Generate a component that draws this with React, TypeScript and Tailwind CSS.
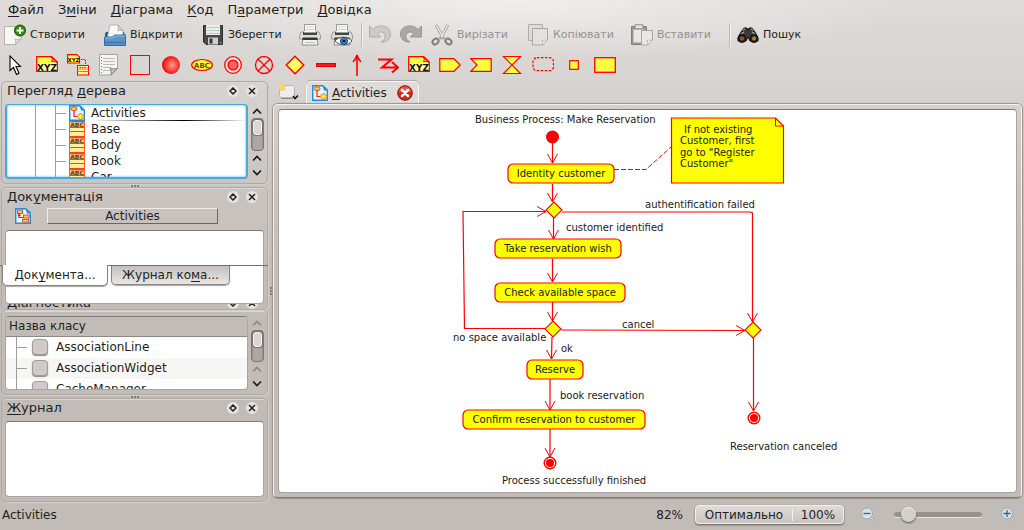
import React, { useState } from "react";
import type { ReactNode } from "react";

const RED = "#ff0000";
const YELLOW = "#ffff40";

function Icon({ children, size = 22 }: { children: ReactNode; size?: number }) {
  return (
    <svg width={size} height={size} viewBox={`0 0 ${size} ${size}`} className="shrink-0" aria-hidden="true">
      {children}
    </svg>
  );
}

/* ---------- main toolbar icons ---------- */

const NewIcon = () => (
  <Icon>
    <path d="M.5 2.500h17v12l-6 6H.5z" fill="#f6f6f5" stroke="#b5b3b0" />
    <path d="M17.500 14.500l-6 6c.3-2 .3-4-.5-5.500 2 .8 4 .6 6.500-.5z" fill="#dcdad8" stroke="#a5a3a0" strokeWidth=".7" />
    <circle cx="16" cy="6.500" r="6" fill="#2f8a0f" />
    <circle cx="16" cy="6.500" r="5.300" fill="none" stroke="#1f6207" />
    <path d="M16 3v7M12.500 6.500h7" stroke="#fff" strokeWidth="2.200" />
  </Icon>
);
const OpenIcon = () => (
  <Icon>
    <path d="M1 10l1-2h18l1 3v9H1z" fill="#27588c" />
    <path d="M6 1h8l5 6v8H3z" fill="#f7f7f7" stroke="#aaa" strokeWidth=".8" />
    <path d="M14 1c.6 2 .4 4-.2 5.700 2-.5 3.500-.5 5.200.3z" fill="#d6d6d6" stroke="#999" strokeWidth=".6" />
    <path d="M.5 13h8l2-2h11v10.500H.5z" fill="#5d94c9" stroke="#326aa3" />
    <path d="M1 14h8l2-2h10" fill="none" stroke="#94bce2" />
    <path d="M1 18.500h20" stroke="#437cb4" strokeWidth="2" />
  </Icon>
);
const SaveIcon = () => (
  <Icon>
    <path d="M1.500 1.500h19v19H4l-2.500-2.500z" fill="#47494b" stroke="#2c2d2e" />
    <rect x="4" y="1" width="14" height="10" fill="#eceeed" />
    <path d="M4 3.500h14M4 6.500h14M4 9.500h14" stroke="#b9cfc4" />
    <rect x="6" y="13.500" width="10" height="7" fill="#cfcfcf" />
    <rect x="7.500" y="14.500" width="3" height="5" fill="#333" />
    <path d="M18 19h2" stroke="#999" />
  </Icon>
);
const PrinterShape = () => (
  <>
    <path d="M5.500 .5h11v8h-11z" fill="#fafafa" stroke="#9a9a9a" />
    <path d="M7 3h8M7 5.500h8" stroke="#d0d0d0" />
    <path d="M2 8h18l1.500 4v3H.5v-3z" fill="#dededd" stroke="#9b9b9a" />
    <rect x="4" y="8" width="14" height="3" fill="#444" />
    <path d="M5 7h12v1.500H5z" fill="#f5f5f5" />
    <path d="M4 15h14l1 6H3z" fill="#f3f3f3" stroke="#8e8e8e" />
    <rect x="3.500" y="13.500" width="15" height="2.500" fill="#333" />
  </>
);
const PrintIcon = () => (
  <Icon>
    <PrinterShape />
    <path d="M6 18.500h10" stroke="#bbb" />
  </Icon>
);
const PreviewIcon = () => (
  <Icon>
    <PrinterShape />
    <path d="M4 17c4-5 12-5 17 0-4 5-12 5-17 0z" fill="#fff" stroke="#555" />
    <circle cx="13" cy="17" r="3.600" fill="#3f83c4" stroke="#1c4f82" />
    <circle cx="13" cy="17" r="1.500" fill="#0d2238" />
  </Icon>
);
const UndoIcon = () => (
  <Icon>
    <path d="M4 5.500C9-.5 21.500 1 21.500 10c0 5-4 8.500-9.500 8 3-1.500 4.500-3.500 4-6.500-.6-4-5-4.500-7.500-2l3 3.500H.5V2z" fill="#cdcbc9" stroke="#aeaca9" />
  </Icon>
);
const RedoIcon = () => (
  <Icon>
    <path d="M18 5.500C13-.5.5 1 .5 10c0 5 4 8.500 9.500 8-3-1.500-4.500-3.500-4-6.500.6-4 5-4.500 7.500-2l-3 3.500h11V2z" fill="#aaa9a6" stroke="#989693" />
  </Icon>
);
const CutIcon = () => (
  <Icon>
    <path d="M5 1l8 14M17 1L9 15" stroke="#a9a7a5" strokeWidth="3" />
    <path d="M5.300 1.500L12 13M16.700 1.500L10 13" stroke="#eeeded" strokeWidth="1.300" />
    <ellipse cx="4.500" cy="17.500" rx="3.300" ry="2.500" transform="rotate(-40 4.500 17.500)" fill="none" stroke="#7f7e7d" strokeWidth="2" />
    <ellipse cx="17.500" cy="17.500" rx="3.300" ry="2.500" transform="rotate(40 17.500 17.500)" fill="none" stroke="#7f7e7d" strokeWidth="2" />
  </Icon>
);
const CopyIcon = () => (
  <Icon>
    <path d="M1.500 .5h14v16h-14z" fill="#dddbd9" stroke="#b0aeab" />
    <path d="M5.500 4.500h15v11l-5 5.500h-10z" fill="#e3e1df" stroke="#aaa8a5" />
    <path d="M20.500 15.500l-5 5.500c.4-2 .2-3.500-.5-5 2 .6 3.500.4 5.500-.5z" fill="#f5f5f4" stroke="#aaa8a5" strokeWidth=".7" />
  </Icon>
);
const PasteIcon = () => (
  <Icon>
    <path d="M.5 2.500h15v18H.5z" fill="#999793" stroke="#81807d" />
    <path d="M2.500 5.500h11v13h-11z" fill="#e9e8e7" />
    <path d="M4 .8h8v4H4z" fill="#e5e4e3" stroke="#8a8986" />
    <path d="M10.500 6.500h11v9l-5 5.500h-6z" fill="#e8e7e6" stroke="#a8a6a4" />
    <path d="M21.500 15.500l-5 5.500c.3-2 .2-3.500-.5-5 2 .6 3.500.4 5.500-.5z" fill="#fafafa" stroke="#a8a6a4" strokeWidth=".7" />
  </Icon>
);
const FindIcon = () => (
  <Icon>
    <path d="M4 8l3-4h3l1 3 1-3h3l3 4 3 6v3h-8l-2-4-2 4H1v-3z" fill="#3b3a38" stroke="#171615" />
    <path d="M6 6l2-1M14 5l2 1M4 10l3-2M15 8l3 2" stroke="#aaa6a0" strokeWidth="1.300" />
    <circle cx="5" cy="14.500" r="4" fill="#2a2521" stroke="#0f0e0d" />
    <circle cx="17" cy="14.500" r="4" fill="#2a2521" stroke="#0f0e0d" />
    <circle cx="5" cy="14.500" r="2" fill="#a0531f" />
    <circle cx="17" cy="14.500" r="2" fill="#b8842a" />
  </Icon>
);

/* ---------- diagram tool icons ---------- */

const Xyz = () => (
  <>
    <path d="M.7 2.700h15L21.300 8v9.300H.7z" fill="#ffff40" stroke={RED} strokeWidth="1.200" />
    <path d="M15 3c1.500 1.500 1.500 3 .5 4.500 2-.3 4 0 5.500 1z" fill="#ffe0a0" stroke={RED} />
    <rect x="2" y="9" width="18.500" height="8" fill="#fff" opacity=".5" />
    <text x="11" y="16.500" textAnchor="middle" fontSize="9" fontWeight="bold" fill="#111" fontFamily="DejaVu Sans">XYZ</text>
  </>
);

const tools: { name: string; art: ReactNode }[] = [
  {
    name: "Select",
    art: <path d="M5 2v14.500l3.500-3 3 7 2.500-1.200-3-6.800h4.500z" fill="#fff" stroke="#000" strokeWidth="1.100" />,
  },
  { name: "Object", art: <Xyz /> },
  {
    name: "Object flow",
    art: (
      <>
        <path d="M.6.600h9L12.500 3v6H.6z" fill="#ffff40" stroke={RED} strokeWidth="1.100" />
        <text x="6.500" y="8" textAnchor="middle" fontSize="5.500" fontWeight="bold" fill="#111" fontFamily="DejaVu Sans">XYZ</text>
        <path d="M14 5.500h4.500V11" fill="none" stroke={RED} strokeDasharray="1.500 1" />
        <rect x="10.500" y="11.500" width="11" height="9.500" fill="#fff59a" stroke={RED} />
        <path d="M10.500 15h11M10.500 17.500h11" stroke="#ff6a2a" />
        <path d="M12.500 13.500h7" stroke="#a33" strokeDasharray="1.500 .8" />
      </>
    ),
  },
  {
    name: "Note",
    art: (
      <>
        <path d="M1.500 .5h18v14l-6.500 6.500H1.500z" fill="#f4f4f3" stroke="#a5a4a2" />
        <path d="M5 4.500h12M5 7.500h12M5 10.500h12M5 13.500h8M5 16.500h7" stroke="#b9b9b8" />
        <path d="M3.500 3v17" stroke="#777" strokeDasharray="1 2" />
        <path d="M19.500 14.500L13 21c.3-2.500.2-4.500-.8-6.500 2.300.6 5.300.5 7.300 0z" fill="#c4c3c1" stroke="#7f7e7c" />
      </>
    ),
  },
  { name: "Box", art: <rect x="1.500" y="1.500" width="19" height="19" fill="none" stroke={RED} /> },
  { name: "Initial node", art: <circle cx="11" cy="11" r="9" fill="url(#ball)" /> },
  {
    name: "Activity",
    art: (
      <>
        <ellipse cx="11" cy="11" rx="10.300" ry="5.500" fill="#ffff40" stroke={RED} strokeWidth="1.200" />
        <text x="11" y="13.500" textAnchor="middle" fontSize="7" fontWeight="bold" fill="#7a3a00" fontFamily="DejaVu Sans">ABC</text>
      </>
    ),
  },
  {
    name: "Final node",
    art: (
      <>
        <circle cx="11" cy="11" r="8.300" fill="#fbe2df" stroke={RED} strokeWidth="1.300" />
        <circle cx="11" cy="11" r="4.900" fill="#ff6060" stroke={RED} strokeWidth="1.300" />
      </>
    ),
  },
  {
    name: "Flow final",
    art: (
      <>
        <circle cx="11" cy="11" r="8.500" fill="none" stroke={RED} strokeWidth="1.300" />
        <path d="M5 5l12 12M17 5L5 17" stroke={RED} strokeWidth="1.300" />
      </>
    ),
  },
  {
    name: "Branch",
    art: (
      <>
        <path d="M11 2.200L19.800 11 11 19.800 2.200 11z" fill="#ffff40" stroke={RED} strokeWidth="1.400" />
        <path d="M6 11l6-5M8 14l7-6" stroke="#fffbd0" strokeWidth="1.500" />
      </>
    ),
  },
  { name: "Fork", art: <rect x="1.500" y="9.500" width="19" height="3" fill="#ff1818" stroke="#e60000" /> },
  { name: "Transition", art: <path d="M11 22V1.500M7 8q3-3 4-7 1 4 4 7" fill="none" stroke={RED} strokeWidth="1.600" /> },
  {
    name: "Exception",
    art: <path d="M1 5.500h13.500L5 13.500h15.500M15 8l6 5.500-6 5" fill="none" stroke={RED} strokeWidth="2" />,
  },
  { name: "Pre/post condition", art: <Xyz /> },
  { name: "Send signal", art: <path d="M.8 4.700h14l6.400 6.300-6.400 6.300H.8z" fill={YELLOW} stroke={RED} strokeWidth="1.200" /> },
  { name: "Accept signal", art: <path d="M.8 4.700h20.400v12.600H.8L7 11z" fill={YELLOW} stroke={RED} strokeWidth="1.200" /> },
  { name: "Time event", art: <path d="M2.500 2.500h17l-17 17h17z" fill={YELLOW} stroke={RED} strokeWidth="1.200" /> },
  {
    name: "Region",
    art: <rect x="1" y="3.700" width="20.500" height="13" rx="4" fill="none" stroke={RED} strokeWidth="1.200" strokeDasharray="2.500 1.500" />,
  },
  { name: "Pin", art: <rect x="6.700" y="6.700" width="8.600" height="8.600" fill={YELLOW} stroke={RED} strokeWidth="1.200" /> },
  { name: "Object node", art: <rect x=".7" y="3.700" width="20.600" height="14.600" fill={YELLOW} stroke={RED} strokeWidth="1.300" /> },
];

/* ---------- small shared drawings ---------- */

const DiagramIcon = () => (
  <Icon size={16}>
    <path d="M.7.700h10L15.300 5v10.300H.7z" fill="#eaf6ff" stroke="#1e8ee0" strokeWidth="1.400" />
    <path d="M10.500 0L16 5.500h-4z" fill="#1e8ee0" />
    <ellipse cx="5" cy="3.700" rx="3" ry="2" fill="#ffc840" stroke="#e0501a" />
    <path d="M5 6v5.500h4" fill="none" stroke="#f02010" strokeWidth="1.200" />
    <path d="M11.500 8l3.500 3.500-3.500 3.500L8 11.500z" fill="#ffee30" stroke="#f06018" />
  </Icon>
);
const ComponentIcon = () => (
  <Icon size={16}>
    <path d="M.7.700h10L15.300 5v10.300H.7z" fill="#eaf6ff" stroke="#1e8ee0" strokeWidth="1.400" />
    <path d="M10.500 0L16 5.500h-4z" fill="#1e8ee0" />
    <rect x="2.500" y="2" width="5" height="3.500" fill="#ffc070" stroke="#e8501a" />
    <path d="M4 6v3.500h4M3 8l1-2 1.500 2" fill="none" stroke="#f02010" strokeWidth="1.200" />
    <rect x="8.500" y="7" width="5.500" height="3" fill="#ffc070" stroke="#e8501a" />
    <rect x="7.500" y="11.500" width="6" height="2.500" fill="#ffd080" stroke="#e8501a" />
  </Icon>
);
const ClassIcon = () => (
  <Icon size={16}>
    <rect width="16" height="16" fill="#fff0a0" />
    <rect y="1" width="16" height="5" fill="#f0c070" />
    <text x="8" y="5.500" textAnchor="middle" fontSize="6" fontWeight="bold" fill="#6b3b10" fontFamily="DejaVu Sans">ABC</text>
    <path d="M0 .5h16M0 6.500h16M0 10.500h16M0 15.500h16" stroke="#ff3c20" strokeWidth="1.200" />
    <path d="M.5 0v16M15.500 0v16" stroke="#ff5a30" />
  </Icon>
);

/* Text with its keyboard mnemonic underlined. */
function Mnemonic({ text, at }: { text: string; at: number }) {
  return (
    <span>
      {text.slice(0, at)}
      <u className="underline-offset-2">{text[at]}</u>
      {text.slice(at + 1)}
    </span>
  );
}

function DockButtons() {
  return (
    <span className="flex gap-[7px]">
      <button aria-label="Float" className="grid size-3 place-items-center rounded-full bg-[#e6e3e0]">
        <svg width="8" height="8" viewBox="0 0 8 8"><path d="M4 1l3 3-3 3-3-3z" fill="none" stroke="#222" strokeWidth="1.500" /></svg>
      </button>
      <button aria-label="Close" className="grid size-3 place-items-center rounded-full bg-[#e6e3e0]">
        <svg width="8" height="8" viewBox="0 0 8 8"><path d="M1 1l6 6M7 1L1 7" stroke="#222" strokeWidth="1.500" /></svg>
      </button>
    </span>
  );
}

function Dock({ title, at, className = "", children }: { title?: string; at?: number; className?: string; children: ReactNode }) {
  return (
    <section className={`rounded-[5px] border border-[#b0aaa5] px-[3px] shadow-[inset_0_1px_0_#dad7d4,1px_1px_0_#d2cecb] ${className}`}>
      {title && (
        <header className="flex h-[18px] items-center justify-between pr-1.5 pl-0.5">
          <h2 className="text-[13px] leading-4"><Mnemonic text={title} at={at ?? 0} /></h2>
          <DockButtons />
        </header>
      )}
      {children}
    </section>
  );
}

function Arrow({ up = false, faint = false, label }: { up?: boolean; faint?: boolean; label: string }) {
  return (
    <button aria-label={label} className={`grid h-3.5 w-3.5 place-items-center ${faint ? "text-[#8d8884]" : "text-[#1f1d1c]"}`}>
      <svg width="10" height="7" viewBox="0 0 10 7">
        <path d={up ? "M1 5.500l4-4 4 4" : "M1 1.500l4 4 4-4"} fill="none" stroke="currentColor" strokeWidth="1.700" />
      </svg>
    </button>
  );
}

function ScrollBar({ faint = false }: { faint?: boolean }) {
  return (
    <div className="flex w-3.5 flex-col items-center">
      <Arrow up faint={faint} label="Scroll up" />
      <div className="w-[13px] flex-1 rounded-[4px] border border-[#7d7773] bg-[#aea7a3] p-px shadow-[inset_0_1px_2px_#6f6a66]">
        <div className="h-[15px] rounded-[3px] border border-[#f4f3f2] bg-[#d9d6d4] shadow-[0_0_1px_1px_#77726e]" />
      </div>
      <Arrow up faint={faint} label="Previous" />
      <Arrow label="Scroll down" />
    </div>
  );
}

const Grip = () => (
  <div className="flex h-[3px] items-center justify-center gap-px" aria-hidden="true">
    <i className="size-[2px] bg-[#86807c]" />
    <i className="size-[2px] bg-[#86807c]" />
    <i className="size-[2px] bg-[#86807c]" />
  </div>
);

const sunken = "rounded-[4px] border border-[#aaa4a0] border-t-[#807a76] bg-white";

/* ---------- bars ---------- */

const menus: [string, number][] = [["Файл", 0], ["Зміни", 1], ["Діаграма", 0], ["Код", 0], ["Параметри", 1], ["Довідка", 0]];

function ToolButton({ icon, label, disabled, className = "" }: { icon: ReactNode; label: string; disabled?: boolean; className?: string }) {
  return (
    <button disabled={disabled} className={`flex h-[30px] items-center gap-1 text-[11px] disabled:text-[#96928f] ${className}`}>
      {icon}
      {label}
    </button>
  );
}

const Separator = () => <div className="h-6 w-0.5 border-l border-[#c0bcb9] bg-[#efeeed]" />;

function MainToolbar() {
  return (
    <div role="toolbar" aria-label="Main" className="flex h-[30px] items-center pl-1">
      <ToolButton icon={<NewIcon />} label="Створити" className="w-[100px]" />
      <ToolButton icon={<OpenIcon />} label="Відкрити" className="w-[98px]" />
      <ToolButton icon={<SaveIcon />} label="Зберегти" className="w-[97px]" />
      <button aria-label="Print" className="w-8"><PrintIcon /></button>
      <button aria-label="Print preview" className="w-[30px]"><PreviewIcon /></button>
      <Separator />
      <button aria-label="Undo" disabled className="ml-[6px] w-[31px]"><UndoIcon /></button>
      <button aria-label="Redo" disabled className="w-[31px]"><RedoIcon /></button>
      <ToolButton icon={<CutIcon />} label="Вирізати" disabled className="w-24" />
      <ToolButton icon={<CopyIcon />} label="Копіювати" disabled className="w-[104px]" />
      <ToolButton icon={<PasteIcon />} label="Вставити" disabled className="w-[98px]" />
      <Separator />
      <ToolButton icon={<FindIcon />} label="Пошук" className="ml-[6px]" />
    </div>
  );
}

/* ---------- side docks ---------- */

function TreeRow({ icon, label, current }: { icon: ReactNode; label: string; current?: boolean }) {
  return (
    <li className="flex h-4 items-center">
      <span className="ml-7 h-4 w-5 border-l border-[#9f9d9b]" />
      <span className="flex h-4 w-3.5 items-center border-l border-[#9f9d9b]">
        <span className="h-px w-2.5 bg-[#9f9d9b]" />
      </span>
      {icon}
      <span className="relative ml-1.5 flex-1 text-[12px] leading-[15px]">
        {label}
        {current && <span className="absolute inset-x-0 bottom-0 h-px bg-linear-to-r from-transparent via-black via-60% to-transparent" />}
      </span>
    </li>
  );
}

function Sidebar() {
  const [checked, setChecked] = useState<Record<string, boolean>>({});
  return (
    <aside className="flex w-[268px] shrink-0 flex-col pt-px pl-px">
      <Dock title="Перегляд дерева" at={9} className="pb-1">
        <div className="mt-1 flex h-[75px] gap-0.5">
          <ul className="flex-1 overflow-hidden rounded-[4px] border-2 border-t-1 border-[#4aa8de] bg-white shadow-[inset_0_0_2px_1px_#b5dcf2]">
            <TreeRow icon={<DiagramIcon />} label="Activities" current />
            {["Base", "Body", "Book", "Car"].map((name) => (
              <TreeRow key={name} icon={<ClassIcon />} label={name} />
            ))}
          </ul>
          <ScrollBar />
        </div>
      </Dock>
      <Grip />
      <Dock title="Документація" at={3} className="relative">
        <div className="flex h-5 items-center px-2.5">
          <ComponentIcon />
          <button className="ml-4 h-4 w-[171px] border border-[#6b6561] border-t-[#eeecea] border-l-[#eeecea] text-[12px] leading-3">
            Activities
          </button>
        </div>
        <textarea aria-label="Документація" className={`mt-1 block h-[74px] w-[259px] resize-none ${sunken}`} />
        <div className="flex h-[5px] items-end justify-between overflow-hidden pr-1.5 pl-0.5">
          <h2 className="text-[13px] leading-3"><Mnemonic text="Діагностика" at={3} /></h2>
          <DockButtons />
        </div>
        <div role="tablist" className="absolute top-[77px] -right-px -left-0.5 flex items-start">
          <span className="h-px w-0.5 bg-[#746f6b]" />
          <button role="tab" aria-selected="true" className="h-[21px] w-[106px] rounded-b-[5px] border border-t-0 border-[#8b8581] bg-white text-[12px] leading-4 shadow-[0_1px_1px_#aaa5a1]">
            <Mnemonic text="Документа..." at={3} />
          </button>
          <div className="flex flex-1 border-t border-[#746f6b] pl-[3px]">
            <button role="tab" aria-selected="false" className="h-[19px] w-[119px] rounded-b-[5px] border border-t-0 border-[#8b8581] bg-linear-to-b from-[#c4bfbb] to-[#e9e7e5] text-[12px] leading-4 shadow-[0_1px_1px_#aaa5a1]">
              <Mnemonic text="Журнал кома..." at={9} />
            </button>
          </div>
        </div>
      </Dock>
      <Dock className="pt-[5px] pb-1">
        <div className="flex h-[74px] gap-0.5">
          <div className={`flex-1 overflow-hidden ${sunken}`}>
            <table className="w-full border-collapse text-left text-[12px]">
              <thead>
                <tr className="border-b border-[#8f8985] bg-[#c1bcb7]">
                  <th className="h-[19px] p-0 pl-[3px] text-[12px] leading-[18px] font-normal">Назва класу</th>
                </tr>
              </thead>
              <tbody>
                {["AssociationLine", "AssociationWidget", "CacheManager"].map((name) => (
                  <tr key={name} className="even:bg-[#f6f6f5]">
                    <td className="p-0 pl-2.5">
                      <label className="flex h-[21px] items-center border-l border-[#9f9d9b]">
                        <span className="h-px w-2.5 bg-[#9f9d9b]" />
                        <input
                          type="checkbox"
                          checked={!!checked[name]}
                          onChange={(e) => setChecked({ ...checked, [name]: e.target.checked })}
                          className="mr-2 ml-[5px] size-4 appearance-none rounded-[4px] border border-[#a29c98] bg-[#d0cbc8] shadow-[0_1px_1px_#8f8985] checked:bg-[#8f8985]"
                        />
                        {name}
                      </label>
                    </td>
                  </tr>
                ))}
              </tbody>
            </table>
          </div>
          <ScrollBar faint />
        </div>
      </Dock>
      <Grip />
      <Dock title="Журнал" at={0} className="flex flex-1 flex-col pb-1">
        <textarea aria-label="Журнал" className={`mt-1 block w-[259px] flex-1 resize-none ${sunken}`} />
      </Dock>
    </aside>
  );
}

/* ---------- activity diagram ---------- */

function Edge({ points, head }: { points: string; head?: "down" | "right" }) {
  const end = points.split(" ").pop()!.split(",").map(Number);
  const [x, y] = end;
  const tip = head === "down" ? `M${x - 5} ${y - 9}L${x} ${y}L${x + 5} ${y - 9}` : `M${x - 9} ${y - 5}L${x} ${y}L${x - 9} ${y + 5}`;
  return (
    <g fill="none" stroke={RED}>
      <polyline points={points} strokeWidth="1.200" />
      {head && <path d={tip} strokeWidth="1" />}
    </g>
  );
}

function Action({ x, y, w, label }: { x: number; y: number; w: number; label: string }) {
  return (
    <g>
      <rect x={x} y={y} width={w} height="19" rx="5" fill="#ffff00" stroke={RED} strokeWidth="1.200" />
      <text x={x + w / 2} y={y + 13} textAnchor="middle">{label}</text>
    </g>
  );
}

const Decision = ({ x, y }: { x: number; y: number }) => (
  <path d={`M${x} ${y - 8}l8 8-8 8-8-8z`} fill="#ffff00" stroke={RED} strokeWidth="1.100" />
);

const EndNode = ({ x, y }: { x: number; y: number }) => (
  <g>
    <circle cx={x} cy={y} r="5.800" fill="#fff" stroke={RED} strokeWidth="1.400" />
    <circle cx={x} cy={y} r="4" fill={RED} />
  </g>
);

function ActivityDiagram() {
  return (
    <svg width="736" height="382" viewBox="279 110 736 382" role="img" aria-label="Activities" fontFamily="DejaVu Sans, sans-serif" fontSize="10" fill="#1a1a1a">
      <text x="475" y="123">Business Process: Make Reservation</text>
      <circle cx="552.500" cy="137" r="6.500" fill={RED} />
      <Edge points="552.5,143 552.5,163" head="down" />
      <Edge points="552.5,184 552.5,202" head="down" />
      <Edge points="562,212 750,212 752.5,213 752.5,322" head="down" />
      <Edge points="545,328.5 464.5,328.5 463,211.500 546,211.500" head="right" />
      <Edge points="553.5,218 553.5,239" head="down" />
      <Edge points="552.5,259 552.5,282" head="down" />
      <Edge points="552.5,302 552.5,321" head="down" />
      <Edge points="561,330 745,330.5" head="right" />
      <Edge points="552,337 551.5,359" head="down" />
      <Edge points="550,379 550,410" head="down" />
      <Edge points="550,429 550,457" head="down" />
      <Edge points="753.5,338 753.5,411" head="down" />
      <polyline points="614,169.500 646,169.500 671,147" fill="none" stroke={RED} strokeDasharray="5 2" />

      <path d="M671.500 118h104l8 8v57h-112z" fill="#ffff00" stroke={RED} strokeWidth="1.200" />
      <path d="M775.500 118v8h8" fill="none" stroke={RED} />
      <text>
        <tspan x="684" y="133">If not existing</tspan>
        <tspan x="680" y="144">Customer, first</tspan>
        <tspan x="680" y="156">go to "Register</tspan>
        <tspan x="680" y="167">Customer"</tspan>
      </text>

      <Action x={508} y={164} w={106} label="Identity customer" />
      <Action x={495} y={239} w={126} label="Take reservation wish" />
      <Action x={495} y={283} w={130} label="Check available space" />
      <Action x={527} y={360} w={56} label="Reserve" />
      <Action x={463} y={410} w={182} label="Confirm reservation to customer" />

      <Decision x={554} y={210} />
      <Decision x={553} y={329} />
      <Decision x={753} y={330} />
      <EndNode x={550} y={463} />
      <EndNode x={754} y={418} />

      <text x="645" y="208">authentification failed</text>
      <text x="566" y="231">customer identified</text>
      <text x="453" y="341">no space available</text>
      <text x="561" y="352">ok</text>
      <text x="622" y="328">cancel</text>
      <text x="560" y="399">book reservation</text>
      <text x="502" y="484">Process successfully finished</text>
      <text x="730" y="450">Reservation canceled</text>
    </svg>
  );
}

function Editor() {
  return (
    <main className="flex min-w-0 flex-1 flex-col pr-0.5 pb-1">
      <div className="flex h-6 items-end pl-1">
        <button aria-label="New diagram" className="mr-1 h-6 w-[25px]">
          <svg width="22" height="18" viewBox="0 0 22 18">
            <rect x="2.500" y="2.500" width="15" height="12" rx="2" fill="#efedec" stroke="#b8b4b1" />
            <path d="M4 15.500h12" stroke="#8c8783" />
            <circle cx="5" cy="4.500" r="3" fill="#f8df52" stroke="#e8d080" />
            <path d="M16 13l2 2.500 3-3" fill="none" stroke="#111" strokeWidth="1.600" />
          </svg>
        </button>
        <div className="flex h-[23px] items-center rounded-t-[5px] border border-b-0 border-[#f7f6f5] bg-[#dedbd9] px-[5px] shadow-[0_-1px_1px_#aaa5a2]">
          <DiagramIcon />
          <button className="mr-2.5 ml-1 text-[12px] leading-4"><Mnemonic text="Activities" at={0} /></button>
          <button aria-label="Close tab">
            <svg width="16" height="16" viewBox="0 0 16 16" className="block">
              <circle cx="8" cy="8" r="7.300" fill="#d6271a" stroke="#961409" />
              <path d="M2 7a6 5.500 0 0112 0z" fill="#ee6a55" opacity=".8" />
              <path d="M5 5l6 6M11 5l-6 6" stroke="#fff" strokeWidth="2.500" strokeLinecap="round" />
            </svg>
          </button>
        </div>
      </div>
      <div className="flex flex-1 rounded-[5px] border border-[#f3f2f1] border-b-[#817b77] p-1 shadow-[0_0_1px_1px_#98928e]">
        <div className={`flex-1 overflow-hidden ${sunken}`}>
          <ActivityDiagram />
        </div>
      </div>
    </main>
  );
}

/* ---------- status bar ---------- */

function Magnifier({ plus = false }: { plus?: boolean }) {
  return (
    <Icon size={16}>
      <path d="M10 10l4.500 4.500" stroke="#a9a6a2" strokeWidth="2.400" />
      <path d="M10 10l4.500 4.500" stroke="#f0efee" />
      <circle cx="7" cy="6.500" r="5.500" fill="#d5e3ea" stroke="#a3adb1" />
      <path d={plus ? "M3.500 6.500h7M7 3v7" : "M3.500 6.500h7"} stroke="#3d6685" strokeWidth="1.300" />
    </Icon>
  );
}

function StatusBar() {
  const [zoom, setZoom] = useState(10);
  return (
    <footer className="flex h-7 items-center pr-2 pb-[3px] pl-0.5 text-[12px]">
      <span className="flex-1">Activities</span>
      <span className="mr-3">82%</span>
      <div className="flex h-[19px] items-center rounded-[4px] border border-[#f1efee] bg-linear-to-b from-[#dedbd9] to-[#c9c4c0] shadow-[0_1px_2px_#5f5a56]">
        <button className="w-[96px] leading-4">Оптимально</button>
        <span className="h-3 w-px bg-[#f5f4f3]" />
        <button className="w-[50px] leading-4">100%</button>
      </div>
      <button aria-label="Zoom out" className="mr-[18px] ml-4"><Magnifier /></button>
      <input
        type="range"
        aria-label="Zoom"
        value={zoom}
        onChange={(e) => setZoom(Number(e.target.value))}
        className="h-4 w-[88px] appearance-none bg-transparent [&::-webkit-slider-runnable-track]:h-[5px] [&::-webkit-slider-runnable-track]:rounded-full [&::-webkit-slider-runnable-track]:bg-[#98928f] [&::-webkit-slider-runnable-track]:shadow-[0_1px_0_#e6e3e1] [&::-webkit-slider-thumb]:-mt-[5px] [&::-webkit-slider-thumb]:size-[15px] [&::-webkit-slider-thumb]:appearance-none [&::-webkit-slider-thumb]:rounded-full [&::-webkit-slider-thumb]:bg-[#d3cfcd] [&::-webkit-slider-thumb]:shadow-[0_1px_2px_#55504d,inset_0_1px_0_#f0eeed]"
      />
      <button aria-label="Zoom in" className="ml-[18px]"><Magnifier plus /></button>
    </footer>
  );
}

export default function App() {
  return (
    <div className="flex min-h-screen flex-col bg-[radial-gradient(ellipse_400px_60px_at_50%_0,#f0efee,transparent),linear-gradient(#dedbd9_0,#d8d4d1_80px,#c9c4c0_190px,#c1bcb7_300px)] font-['DejaVu_Sans',sans-serif] text-[#221f1e]">
      <svg width="0" height="0" className="absolute" aria-hidden="true">
        <radialGradient id="ball" cx=".55" cy=".5" r=".55">
          <stop offset="0" stopColor="#ff9a94" />
          <stop offset=".55" stopColor="#ff4a40" />
          <stop offset="1" stopColor="#ee0000" />
        </radialGradient>
      </svg>
      <nav className="flex h-5 items-center pl-px">
        {menus.map(([text, at]) => (
          <button key={text} className="px-[7px] text-[13px] leading-5"><Mnemonic text={text} at={at} /></button>
        ))}
      </nav>
      <MainToolbar />
      <div role="toolbar" aria-label="Diagram tools" className="flex h-[30px] items-center">
        {tools.map((tool) => (
          <button key={tool.name} aria-label={tool.name} className="grid w-[31px] place-items-center">
            <Icon>{tool.art}</Icon>
          </button>
        ))}
      </div>
      <div className="flex flex-1">
        <Sidebar />
        <div className="flex w-[5px] flex-col items-center justify-center gap-px" aria-hidden="true">
          <i className="size-[2px] bg-[#86807c]" />
          <i className="size-[2px] bg-[#86807c]" />
          <i className="size-[2px] bg-[#86807c]" />
        </div>
        <Editor />
      </div>
      <StatusBar />
    </div>
  );
}
